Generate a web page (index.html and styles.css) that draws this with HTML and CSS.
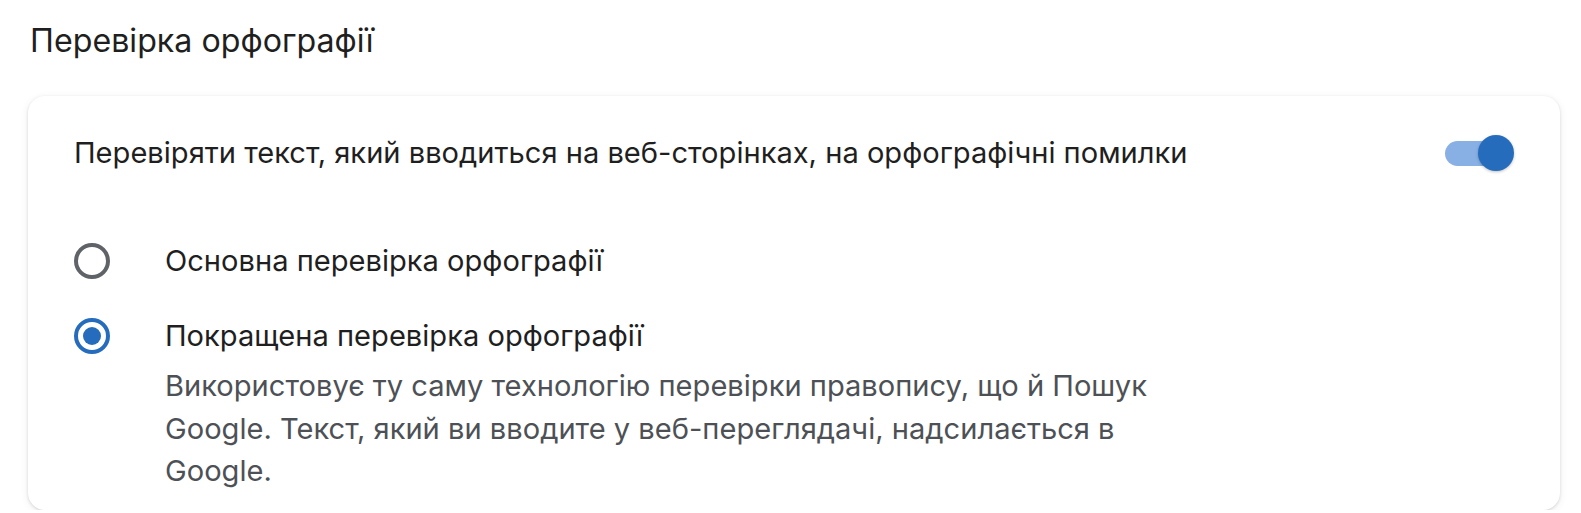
FILE: index.html
```html
<!DOCTYPE html>
<html lang="uk">
<head>
<meta charset="utf-8">
<title>Перевірка орфографії</title>
<link rel="stylesheet" href="styles.css">
</head>
<body>
<div class="page">
  <h2 class="section-title">Перевірка орфографії</h2>
  <div class="card">
    <div class="toggle-row">
      <span class="row-label">Перевіряти текст, який вводиться на веб-сторінках, на орфографічні помилки</span>
      <span class="toggle on"><span class="track"></span><span class="knob"></span></span>
    </div>
    <div class="radio-group">
      <div class="option">
        <span class="radio"></span>
        <div class="option-text">
          <div class="option-label">Основна перевірка орфографії</div>
        </div>
      </div>
      <div class="option">
        <span class="radio checked"></span>
        <div class="option-text">
          <div class="option-label">Покращена перевірка орфографії</div>
          <div class="option-desc">Використовує ту саму технологію перевірки правопису, що й Пошук Google. Текст, який ви вводите у веб-переглядачі, надсилається в Google.</div>
        </div>
      </div>
    </div>
  </div>
</div>
</body>
</html>
```

FILE: styles.css
```css
html, body {
  margin: 0;
  padding: 0;
  background: #ffffff;
}

body {
  font-family: Inter, Roboto, "Noto Sans", "Liberation Sans", sans-serif;
  color: #1f1f1f;
}

.page {
  padding: 21px 21px 0 28px;
}

.section-title {
  margin: 0 0 35px 2px;
  font-size: 32.2px;
  font-weight: 400;
  line-height: 40px;
  color: #1f1f1f;
}

.card {
  background: #fff;
  border-radius: 17px;
  box-shadow: 0 1px 3px rgba(60, 64, 67, 0.18), 0 2px 8px rgba(60, 64, 67, 0.08);
  padding: 0 46px 10px 46px;
  height: 414px;
  box-sizing: border-box;
}

.toggle-row {
  display: flex;
  align-items: center;
  justify-content: space-between;
  height: 113px;
}

.row-label {
  font-size: 29.1px;
  line-height: 42px;
}

.toggle {
  position: relative;
  width: 69px;
  height: 36px;
  display: inline-block;
}

.toggle .track {
  position: absolute;
  left: 0;
  top: 6px;
  width: 62px;
  height: 25px;
  border-radius: 13px;
  background: #88b0e4;
}

.toggle .knob {
  position: absolute;
  right: 0;
  top: 0;
  width: 36px;
  height: 36px;
  border-radius: 50%;
  background: #266cbd;
  box-shadow: 0 1px 3px rgba(0, 0, 0, 0.25);
}

.radio-group {
  padding-top: 31px;
}

.option {
  display: flex;
  align-items: flex-start;
  gap: 55px;
  margin-bottom: 33px;
}

.radio {
  flex: none;
  width: 36px;
  height: 36px;
  margin-top: 3px;
  box-sizing: border-box;
  border: 4px solid #5f6368;
  border-radius: 50%;
  position: relative;
}

.radio.checked {
  border-color: #266cbd;
}

.radio.checked::after {
  content: "";
  position: absolute;
  left: 5px;
  top: 5px;
  width: 18px;
  height: 18px;
  border-radius: 50%;
  background: #266cbd;
}

.option-label {
  font-size: 29.1px;
  line-height: 42px;
  color: #1f1f1f;
}

.option-desc {
  margin-top: 8px;
  width: 990px;
  font-size: 29.1px;
  line-height: 42.5px;
  color: #4d5156;
}
```
